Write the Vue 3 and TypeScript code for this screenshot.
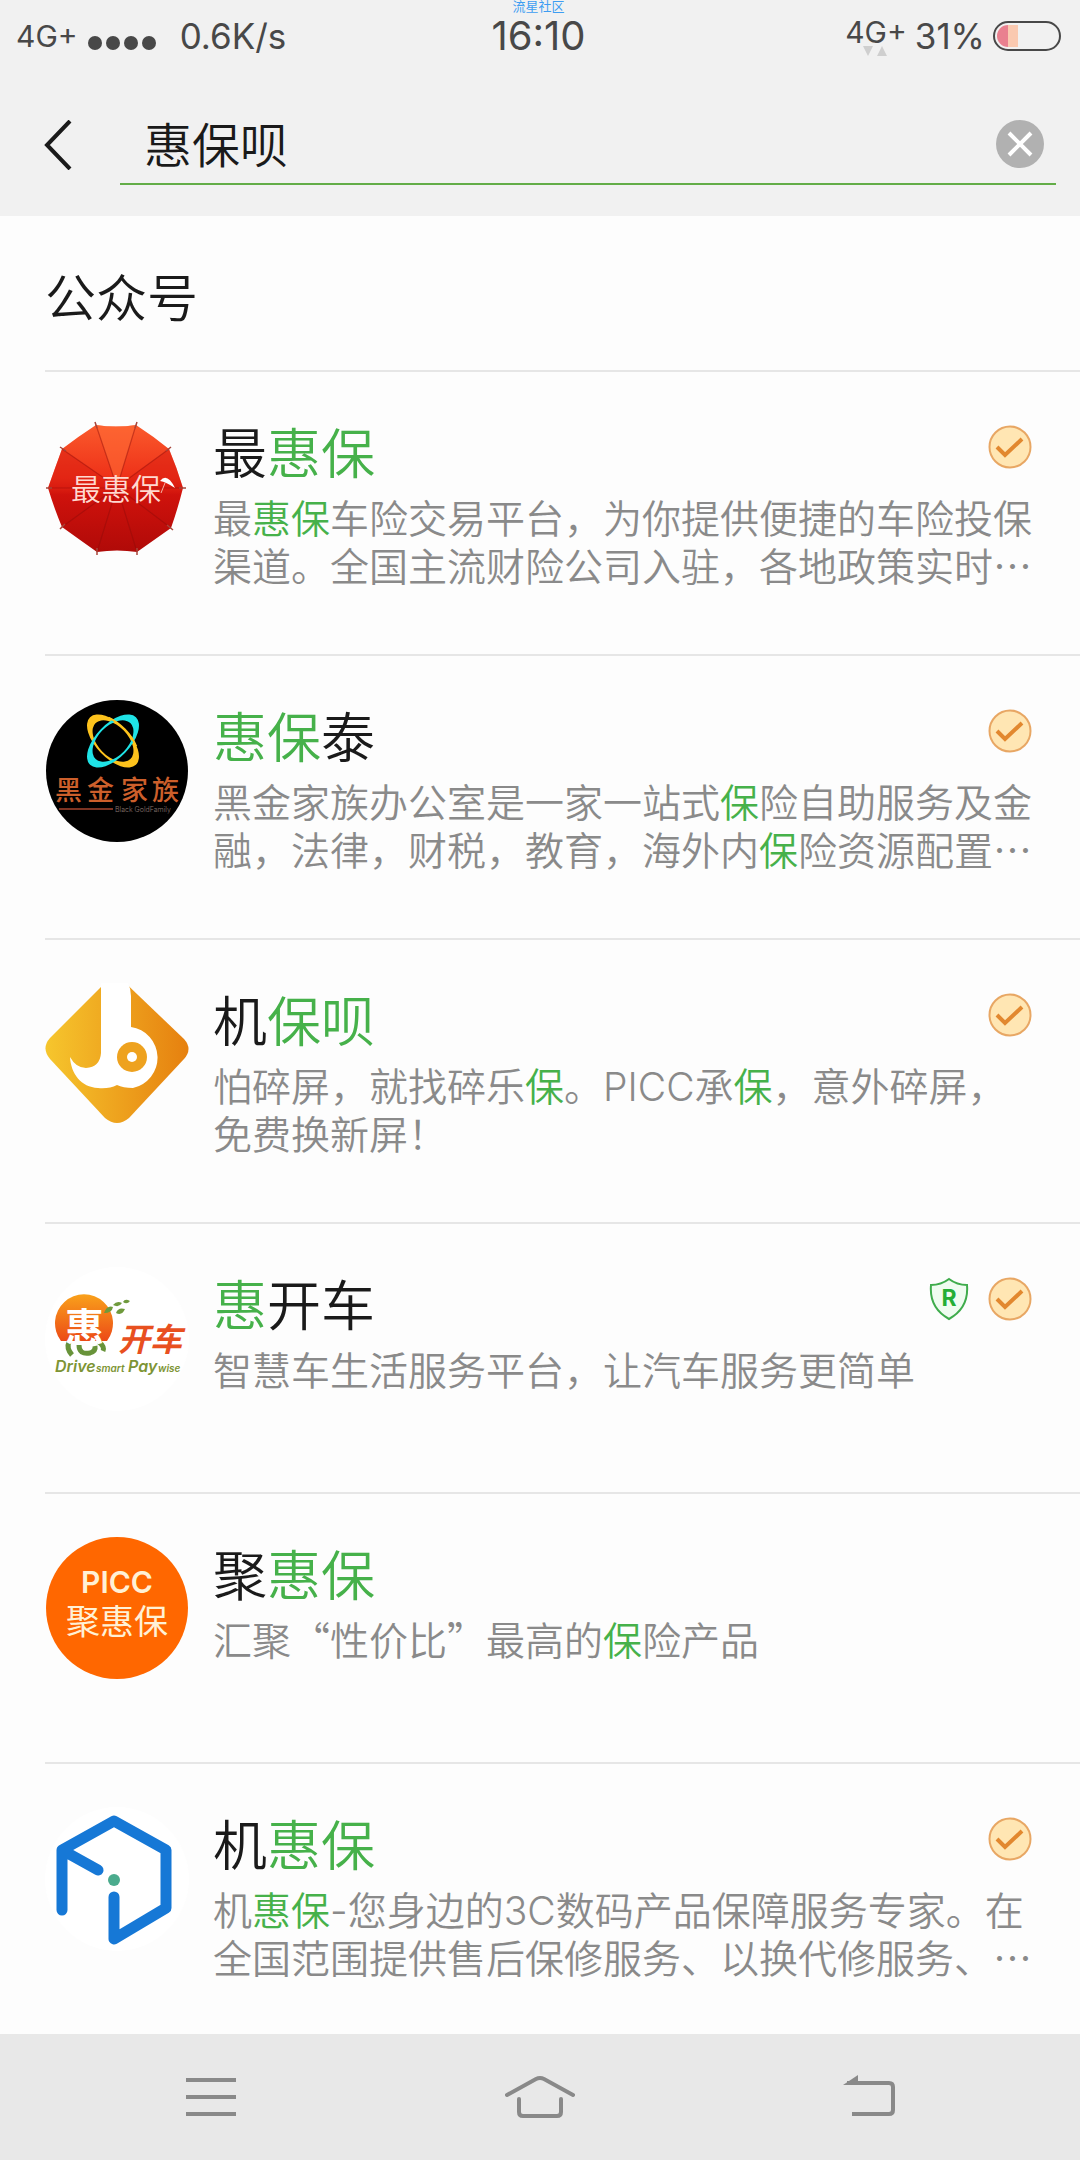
<script setup lang="ts">
import { ref } from 'vue'

type Logo = 'umbrella' | 'orbit' | 'diamond' | 'drive' | 'picc' | 'hexagon'

interface Account {
  logo: Logo
  name: string
  intro: string
  trademark?: boolean
  verified?: boolean
}

interface Piece {
  text: string
  kind: string
}

const keyword = ref('惠保呗')

/* Matched words are wrapped in square brackets */
const accounts: Account[] = [
  { logo: 'umbrella', name: '最[惠保]', intro: '最[惠保]车险交易平台，为你提供便捷的车险投保渠道。全国主流财险公司入驻，各地政策实时…', verified: true },
  { logo: 'orbit', name: '[惠保]泰', intro: '黑金家族办公室是一家一站式[保]险自助服务及金融，法律，财税，教育，海外内[保]险资源配置…', verified: true },
  { logo: 'diamond', name: '机[保呗]', intro: '怕碎屏，就找碎乐[保]。PICC承[保]，意外碎屏，免费换新屏！', verified: true },
  { logo: 'drive', name: '[惠]开车', intro: '智慧车生活服务平台，让汽车服务更简单', trademark: true, verified: true },
  { logo: 'picc', name: '聚[惠保]', intro: '汇聚“性价比”最高的[保]险产品' },
  { logo: 'hexagon', name: '机[惠保]', intro: '机[惠保]-您身边的3C数码产品保障服务专家。在全国范围提供售后保修服务、以换代修服务、…', verified: true },
]

function pieces(source: string): Piece[] {
  return (source.match(/\[[^\]]+\]|[A-Za-z0-9-]+|[^[\]A-Za-z0-9-]+/g) ?? []).map((part) => {
    if (part.startsWith('[')) return { text: part.slice(1, -1), kind: 'hit' }
    return { text: part, kind: /^[A-Za-z0-9-]/.test(part) ? 'latin' : 'plain' }
  })
}
</script>

<template>
  <div class="screen" lang="zh-CN">
    <header class="top">
      <div class="status">
        <div class="status-side">
          <span class="network">4G+</span>
          <span class="signal"><i></i><i></i><i></i><i></i></span>
          <span class="rate">0.6K/s</span>
        </div>
        <div class="clock">
          <span class="watermark">流星社区</span>
          <time>16:10</time>
        </div>
        <div class="status-side end">
          <span class="network raised">4G+
            <svg class="traffic" width="24" height="10" viewBox="0 0 24 10" aria-hidden="true">
              <path d="M0 0H10L5 10ZM14 10H24L19 0Z" fill="#cfcfcf" />
            </svg>
          </span>
          <span class="percent">31%</span>
          <svg width="68" height="30" viewBox="0 0 68 30" aria-hidden="true">
            <rect x="1" y="1" width="66" height="28" rx="14" fill="none" stroke="#484848" stroke-width="2" />
            <path d="M15 4A11 11 0 0 0 15 26Z" fill="#e9808f" />
            <rect x="15" y="4" width="10" height="22" fill="#fac9b0" />
          </svg>
        </div>
      </div>
      <form class="search" @submit.prevent>
        <button type="button" class="back" aria-label="返回">
          <svg width="28" height="50" viewBox="0 0 28 50"><path d="M26 1L3 25L26 49" fill="none" stroke="#1a1a1a" stroke-width="4" /></svg>
        </button>
        <div class="field">
          <input v-model="keyword" type="text" aria-label="搜索" />
          <button type="button" class="clear" aria-label="清除" @click="keyword = ''">
            <svg width="48" height="48" viewBox="0 0 48 48">
              <circle cx="24" cy="24" r="24" fill="#b1b1b1" />
              <path d="M13 13L35 35M35 13L13 35" stroke="#fff" stroke-width="4" />
            </svg>
          </button>
        </div>
      </form>
    </header>

    <main class="results">
      <h1>公众号</h1>
      <ul>
        <li v-for="account in accounts" :key="account.name">
          <a href="#" class="row">
            <svg class="avatar" width="144" height="144" viewBox="0 0 144 144" aria-hidden="true">
              <g v-if="account.logo === 'umbrella'">
                <defs>
                  <linearGradient id="canopy" x1="0" y1="0" x2="0" y2="1">
                    <stop offset="0" stop-color="#fa5a2c" />
                    <stop offset=".42" stop-color="#ee3018" />
                    <stop offset=".55" stop-color="#cf120c" />
                    <stop offset="1" stop-color="#b00a08" />
                  </linearGradient>
                </defs>
                <path d="M51 10Q71 13 91 10Q108 21 124 34Q132 53 138 73Q133 93 126 113Q109 125 92 137Q72 134 52 137Q35 125 17 112Q9 93 3 73Q10 53 17 34Q34 21 51 10Z" fill="url(#canopy)" />
                <path d="M72 72L51 10Q71 13 91 10Z" fill="#ff6a35" opacity=".6" />
                <path d="M72 72L17 34Q10 53 3 73ZM72 72L124 34Q132 53 138 73Z" fill="#d41810" opacity=".45" />
                <path d="M51 10L72 72L91 10M124 34L72 72L17 34M3 73H138M126 113L72 72L92 137M52 137L72 72L17 112" fill="none" stroke="#8d0b08" stroke-opacity=".45" stroke-width="1.200" />
                <path d="M50 7L52 13M92 7L90 13M126 32L121 36M141 73H134M128 115L122 110M92 140V133M52 140V133M15 114L20 109M1 73H7M15 32L21 36" stroke="#a8453a" stroke-width="1.500" />
                <text x="26" y="85" font-size="30" fill="#ffd9d0" font-weight="350">最惠保</text>
                <path d="M115 66Q122 57 130 73Q121 67 115 66Z" fill="#fff" />
                <path d="M120 68L116 78" stroke="#f6b5a8" />
              </g>
              <g v-else-if="account.logo === 'orbit'">
                <circle cx="72" cy="72" r="71" fill="#000" />
                <g transform="translate(68 42)" fill-rule="evenodd">
                  <path transform="rotate(46)" d="M-33 0A33 17 0 1 1 33 0A33 17 0 1 1 -33 0ZM-25 0A25 15 0 1 0 25 0A25 15 0 1 0 -25 0Z" fill="#fdc21c" />
                  <path transform="rotate(-46)" d="M-33 0A33 17 0 1 1 33 0A33 17 0 1 1 -33 0ZM-25 0A25 15 0 1 0 25 0A25 15 0 1 0 -25 0Z" fill="#1fe3e6" />
                  <path transform="rotate(46)" d="M-20 -13A33 17 0 0 1 20 -13" fill="none" stroke="#fdc21c" stroke-width="2" />
                </g>
                <text x="10 42 76 107" y="101" font-size="27" font-weight="500" fill="#cc5f2b">黑金家族</text>
                <path d="M14 110H68" stroke="#7c3322" stroke-width="2" />
                <text class="latin" x="70" y="113" font-size="7" fill="#8b7770">Black GoldFamily</text>
              </g>
              <g v-else-if="account.logo === 'diamond'">
                <defs>
                  <linearGradient id="gold" x1="0" x2="1">
                    <stop offset="0" stop-color="#f6c62d" />
                    <stop offset="1" stop-color="#e6800f" />
                  </linearGradient>
                </defs>
                <path d="M70 -10L5 55Q-4 65 5 76L60 135Q72 145 84 135L139 76Q148 66 139 56Z" fill="url(#gold)" />
                <path d="M56 -2H80L83 0Q86 6 86 13V44A31 31 0 0 1 88 105Q78 105 72 102Q64 106 53 105C36 104 26 91 25 74Q31 85 41 85Q55 84 56 70Z" fill="#fff" />
                <circle cx="87" cy="74" r="15" fill="#eea21f" />
                <circle cx="87" cy="74" r="5" fill="#fff" />
              </g>
              <g v-else-if="account.logo === 'drive'">
                <defs>
                  <linearGradient id="sun" x1="0" y1="0" x2="0" y2="1">
                    <stop offset="0" stop-color="#f9a11b" />
                    <stop offset="1" stop-color="#ec4a17" />
                  </linearGradient>
                </defs>
                <circle cx="72" cy="72" r="72" fill="#fff" />
                <path d="M16 74A29 29 0 1 1 62 74Z" fill="url(#sun)" />
                <path d="M24 75Q21 81 27 88M34 78Q34 88 45 86Q51 84 50 79M54 75Q60 80 58 84" fill="none" stroke="#68933a" stroke-width="5" />
                <text x="20" y="74" font-size="39" font-weight="700" fill="#fff">惠</text>
                <path d="M59 46Q62 38 68 40Q67 46 59 46ZM68 38Q72 33 77 36Q74 41 68 38ZM71 46Q73 40 80 42Q77 49 71 46ZM78 35Q80 31 85 34Q82 38 78 35ZM85 38L89 37Z" fill="#6f9a3c" />
                <text x="73" y="84" font-size="32" font-weight="700" font-style="italic" fill="#e8501f">开车</text>
                <g class="latin" font-style="italic" font-weight="600" fill="#7d9434">
                  <text x="10" y="105" font-size="16">Drive</text>
                  <text x="51" y="105" font-size="10">smart</text>
                  <text x="83" y="105" font-size="16">Pay</text>
                  <text x="113" y="105" font-size="10">wise</text>
                </g>
              </g>
              <g v-else-if="account.logo === 'picc'">
                <circle cx="72" cy="71" r="71" fill="#ff6700" />
                <text class="latin" x="72" y="56" font-size="30" font-weight="600" text-anchor="middle" fill="#fff1d6">PICC</text>
                <text x="72" y="97" font-size="34" font-weight="400" text-anchor="middle" fill="#fff1d6">聚惠保</text>
              </g>
              <g v-else>
                <circle cx="72" cy="72" r="72" fill="#fff" />
                <path d="M17 103V43L69 14L121 43V101L69 132V90M17 43L53 63" fill="none" stroke="#1678d6" stroke-width="11" stroke-linecap="round" stroke-linejoin="round" />
                <circle cx="69" cy="73" r="6" fill="#4bab8d" />
              </g>
            </svg>
            <div class="body">
              <div class="heading">
                <h2><span v-for="(piece, i) in pieces(account.name)" :key="i" :class="piece.kind">{{ piece.text }}</span></h2>
                <svg v-if="account.trademark" width="40" height="44" viewBox="0 0 40 44" role="img" aria-label="商标">
                  <path d="M20 2Q28 8 38 8Q40 31 20 42Q0 31 2 8Q12 8 20 2Z" fill="#effcf0" stroke="#3fac4c" stroke-width="2" />
                  <text class="latin" x="20" y="29" font-size="23" font-weight="700" text-anchor="middle" fill="#24ae35">R</text>
                </svg>
                <svg v-if="account.verified" width="44" height="44" viewBox="0 0 44 44" role="img" aria-label="已认证">
                  <circle cx="22" cy="22" r="20.500" fill="#ffe6b3" stroke="#e8a764" stroke-width="2" />
                  <path d="M9 22L17 30L34 14" fill="none" stroke="#e2882f" stroke-width="4" />
                </svg>
              </div>
              <p><span v-for="(piece, i) in pieces(account.intro)" :key="i" :class="piece.kind">{{ piece.text }}</span></p>
            </div>
          </a>
        </li>
      </ul>
    </main>

    <nav class="keys">
      <button type="button" aria-label="菜单">
        <svg width="50" height="44" viewBox="0 0 50 44"><path d="M0 5H50M0 22H50M0 39H50" stroke="#898989" stroke-width="4" /></svg>
      </button>
      <button type="button" aria-label="主页">
        <svg width="70" height="44" viewBox="0 0 70 44">
          <path d="M2 20L31 4Q35 2 39 4L68 20M14 24V37Q14 41 18 41H52Q56 41 56 37V24" fill="none" stroke="#898989" stroke-width="4" stroke-linecap="round" />
        </svg>
      </button>
      <button type="button" aria-label="后退">
        <svg width="52" height="44" viewBox="0 0 52 44">
          <path d="M4 8H46Q50 8 50 12V35Q50 39 46 39H9" fill="none" stroke="#898989" stroke-width="4" />
          <path d="M0 10L15 0V10Z" fill="#898989" />
        </svg>
      </button>
    </nav>
  </div>
</template>

<style>
body {
  background: #fdfdfd;
}
</style>

<style scoped>
.screen {
  display: flex;
  flex-direction: column;
  height: 100vh;
  background: #fdfdfd;
  color: #1a1a1a;
  font-family: "Noto Sans CJK SC", sans-serif;
  font-weight: 350;
  text-spacing-trim: space-all;
}

button {
  display: flex;
  align-items: center;
  padding: 0;
  border: 0;
  background: none;
  cursor: pointer;
}

.latin {
  font-family: Inter, sans-serif;
  line-height: 1;
}

.top {
  flex: none;
  background: #f1f1f1;
}

.status {
  display: grid;
  grid-template-columns: 1fr auto 1fr;
  align-items: center;
  height: 72px;
  padding: 0 19px 0 16px;
  color: #484848;
  font-family: Inter, sans-serif;
  font-weight: 400;
}

.status-side {
  display: flex;
  align-items: center;
  gap: 10px;
}

.end {
  justify-content: flex-end;
}

.network {
  position: relative;
  font-size: 30px;
}

.raised {
  padding-bottom: 8px;
}

.traffic {
  position: absolute;
  bottom: 2px;
  left: 18px;
}

.signal {
  display: flex;
  gap: 4px;
  padding-top: 14px;
}

.signal i {
  width: 14px;
  height: 14px;
  border-radius: 50%;
  background: #484848;
}

.rate {
  padding-left: 14px;
  font-size: 35px;
}

.percent {
  font-size: 35px;
}

.clock {
  position: relative;
  font-size: 40px;
  line-height: 46px;
}

.watermark {
  position: absolute;
  top: -14px;
  left: 50%;
  transform: translateX(-50%);
  color: #3d9df2;
  font-family: "Noto Sans CJK SC", sans-serif;
  font-size: 13px;
  line-height: 13px;
  white-space: nowrap;
}

.end {
  gap: 8px;
}

.search {
  display: flex;
  padding: 32px 24px 31px 0;
}

.back {
  flex: none;
  width: 120px;
  padding-left: 44px;
}

.field {
  display: flex;
  flex: 1;
  align-items: center;
  min-width: 0;
  height: 79px;
  padding: 0 12px 0 24px;
  border-bottom: 2px solid #63ad48;
}

.field input {
  flex: 1;
  min-width: 0;
  padding: 0 0 4px;
  border: 0;
  outline: 0;
  background: none;
  color: #1a1a1a;
  font: inherit;
  font-size: 48px;
  line-height: 64px;
}

.results {
  flex: 1;
  min-height: 0;
  overflow-y: auto;
  scrollbar-width: none;
}

h1 {
  margin: 0;
  padding: 39px 45px 35px;
  font-size: 51px;
  font-weight: 350;
  line-height: 80px;
}

ul {
  margin: 0;
  padding: 0 0 0 45px;
  list-style: none;
}

.row {
  display: flex;
  gap: 24px;
  padding: 43px 46px 66px 0;
  border-top: 2px solid #e6e6e6;
  color: inherit;
  text-decoration: none;
}

.avatar {
  flex: none;
  margin-bottom: 15px;
}

.body {
  flex: 1;
  min-width: 0;
  padding-top: 10px;
}

.heading {
  display: flex;
  gap: 19px;
  align-items: flex-start;
  padding-right: 2px;
}

h2 {
  flex: 1;
  margin: 0;
  font-size: 54px;
  font-weight: 350;
  line-height: 52px;
}

p {
  margin: 15px 0 0;
  color: #8a8a8a;
  font-size: 39px;
  line-height: 48px;
}

.hit {
  color: #46b14a;
}

.keys {
  display: flex;
  flex: none;
  height: 126px;
  padding: 0 46px;
  background: #e8e8e8;
}

.keys button {
  flex: 1;
  justify-content: center;
}
</style>
